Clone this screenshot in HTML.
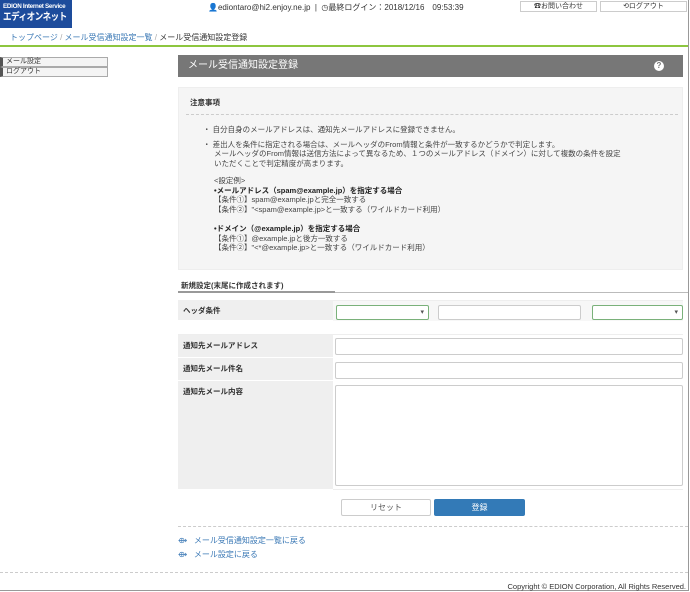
<!DOCTYPE html>
<html><head><meta charset="utf-8"><style>
*{box-sizing:border-box;margin:0;padding:0}
body{width:690px;height:592px;position:relative;font-family:"Liberation Sans","Noto Sans CJK JP",sans-serif;font-size:8px;color:#333;background:#fff;overflow:hidden}
.a{position:absolute}
.frame{left:0;top:0;width:689px;height:591px;border-right:1px solid #999;border-bottom:1px solid #999}
.logo{left:0;top:0;width:72px;height:28px;background:#1d4c9c;color:#fff;padding:3px 0 0 3px;white-space:nowrap;overflow:hidden}
.logo .s{font-size:6.3px;font-weight:bold;letter-spacing:-0.3px;line-height:8px}
.logo .b{font-size:10px;font-weight:bold;line-height:13px;letter-spacing:-0.5px;display:inline-block;transform:scaleX(0.85);transform-origin:left}
.btn{border:1px solid #ccc;background:#fff;text-align:center;font-size:7px;line-height:10px;height:11px}
.side div{height:10px;border:1px solid #aaa;border-left:3px solid #555;background:#f4f4f4;font-size:7px;line-height:8px;padding-left:3px;width:108px}
.inp{border:1px solid #ccc;border-radius:2px;background:#fff}
.sel{border:1px solid #7ab17a;border-radius:2px;background:#fff}
.sel:after{content:"▾";position:absolute;right:4px;top:2px;font-size:7px;color:#555}
.lbl{background:#efefef;font-weight:bold;font-size:7.5px;padding:5px 0 0 5px;border-bottom:1px solid #fff}
.link{color:#3a78b5;font-size:8px}
</style></head><body>
<div class="a frame"></div>
<div class="a logo"><div class="s">EDION Internet Service</div><div class="b">エディオンネット</div></div>
<div class="a" style="left:208px;top:2px;font-size:8px">👤ediontaro@hi2.enjoy.ne.jp &nbsp;|&nbsp; ◷最終ログイン：2018/12/16　09:53:39</div>
<div class="a btn" style="left:520px;top:1px;width:77px">☎お問い合わせ</div>
<div class="a btn" style="left:600px;top:1px;width:87px">⟲ログアウト</div>
<div class="a" style="left:10px;top:32px;font-size:8px;color:#3a78b5">トップページ <span style="color:#aaa">/</span> メール受信通知設定一覧 <span style="color:#aaa">/</span> <span style="color:#333">メール受信通知設定登録</span></div>
<div class="a" style="left:0;top:45px;width:688px;height:2px;background:#8dc63f"></div>
<div class="a side" style="left:0;top:57px"><div>メール設定</div><div>ログアウト</div></div>
<div class="a" style="left:178px;top:55px;width:505px;height:22px;background:#777;color:#fff;font-size:10px;line-height:22px;padding-left:10px">メール受信通知設定登録<span style="position:absolute;right:19px;top:6px;width:10px;height:10px;border-radius:50%;background:#fff;color:#777;font-size:8px;line-height:10px;text-align:center;font-weight:bold">?</span></div>
<div class="a" style="left:178px;top:87px;width:505px;height:183px;background:#f5f5f5;border:1px solid #eee"></div>
<div class="a" style="left:190px;top:97px;font-weight:bold;font-size:7.5px">注意事項</div>
<div class="a" style="left:186px;top:114px;width:492px;border-top:1px dashed #ccc"></div>
<div class="a" style="left:203px;top:125px;font-size:7.5px;line-height:9.5px;color:#444">
<div>・ 自分自身のメールアドレスは、通知先メールアドレスに登録できません。</div>
<div style="margin-top:5px">・ 差出人を条件に指定される場合は、メールヘッダのFrom情報と条件が一致するかどうかで判定します。</div>
<div style="padding-left:11px">メールヘッダのFrom情報は送信方法によって異なるため、１つのメールアドレス（ドメイン）に対して複数の条件を設定<br>いただくことで判定精度が高まります。</div>
<div style="padding-left:11px;margin-top:8px">&lt;設定例&gt;<br><b style="color:#222">•メールアドレス（spam@example.jp）を指定する場合</b><br>【条件①】spam@example.jpと完全一致する<br>【条件②】"&lt;spam@example.jp&gt;と一致する（ワイルドカード利用）</div>
<div style="padding-left:11px;margin-top:10px"><b style="color:#222">•ドメイン（@example.jp）を指定する場合</b><br>【条件①】@example.jpと後方一致する<br>【条件②】"&lt;*@example.jp&gt;と一致する（ワイルドカード利用）</div>
</div>
<div class="a" style="left:181px;top:280px;font-weight:bold;font-size:7.5px">新規設定(末尾に作成されます)</div>
<div class="a" style="left:178px;top:292px;width:510px;height:1px;background:#bbb"></div>
<div class="a" style="left:178px;top:291px;width:157px;height:2px;background:#999"></div>
<div class="a" style="left:178px;top:300px;width:505px;height:21px;background:#f7f7f7;border-top:1px solid #eee"></div>
<div class="a lbl" style="left:178px;top:300px;width:155px;height:21px">ヘッダ条件</div>
<div class="a sel" style="left:336px;top:305px;width:93px;height:15px"></div>
<div class="a inp" style="left:438px;top:305px;width:143px;height:15px"></div>
<div class="a sel" style="left:592px;top:305px;width:91px;height:15px"></div>
<div class="a" style="left:178px;top:334px;width:505px;height:156px;background:#fff;border-top:1px solid #eee;border-bottom:1px solid #eee"></div>
<div class="a lbl" style="left:178px;top:335px;width:155px;height:23px">通知先メールアドレス</div>
<div class="a lbl" style="left:178px;top:358px;width:155px;height:23px">通知先メール件名</div>
<div class="a lbl" style="left:178px;top:381px;width:155px;height:109px">通知先メール内容</div>
<div class="a inp" style="left:335px;top:338px;width:348px;height:17px"></div>
<div class="a inp" style="left:335px;top:362px;width:348px;height:17px"></div>
<div class="a inp" style="left:335px;top:385px;width:348px;height:101px"></div>
<div class="a" style="left:341px;top:499px;width:90px;height:17px;border:1px solid #ccc;border-radius:2px;text-align:center;line-height:15px;color:#555">リセット</div>
<div class="a" style="left:434px;top:499px;width:91px;height:17px;background:#337ab7;border-radius:2px;text-align:center;line-height:17px;color:#fff">登録</div>
<div class="a" style="left:178px;top:526px;width:510px;border-top:1px dashed #ccc"></div>
<div class="a link" style="left:178px;top:535px">⟴&nbsp;&nbsp; メール受信通知設定一覧に戻る</div>
<div class="a link" style="left:178px;top:549px">⟴&nbsp;&nbsp; メール設定に戻る</div>
<div class="a" style="left:0;top:572px;width:688px;border-top:1px dashed #ccc"></div>
<div class="a" style="right:4px;top:582px;font-size:7.5px;color:#333">Copyright © EDION Corporation, All Rights Reserved.</div>
</body></html>
